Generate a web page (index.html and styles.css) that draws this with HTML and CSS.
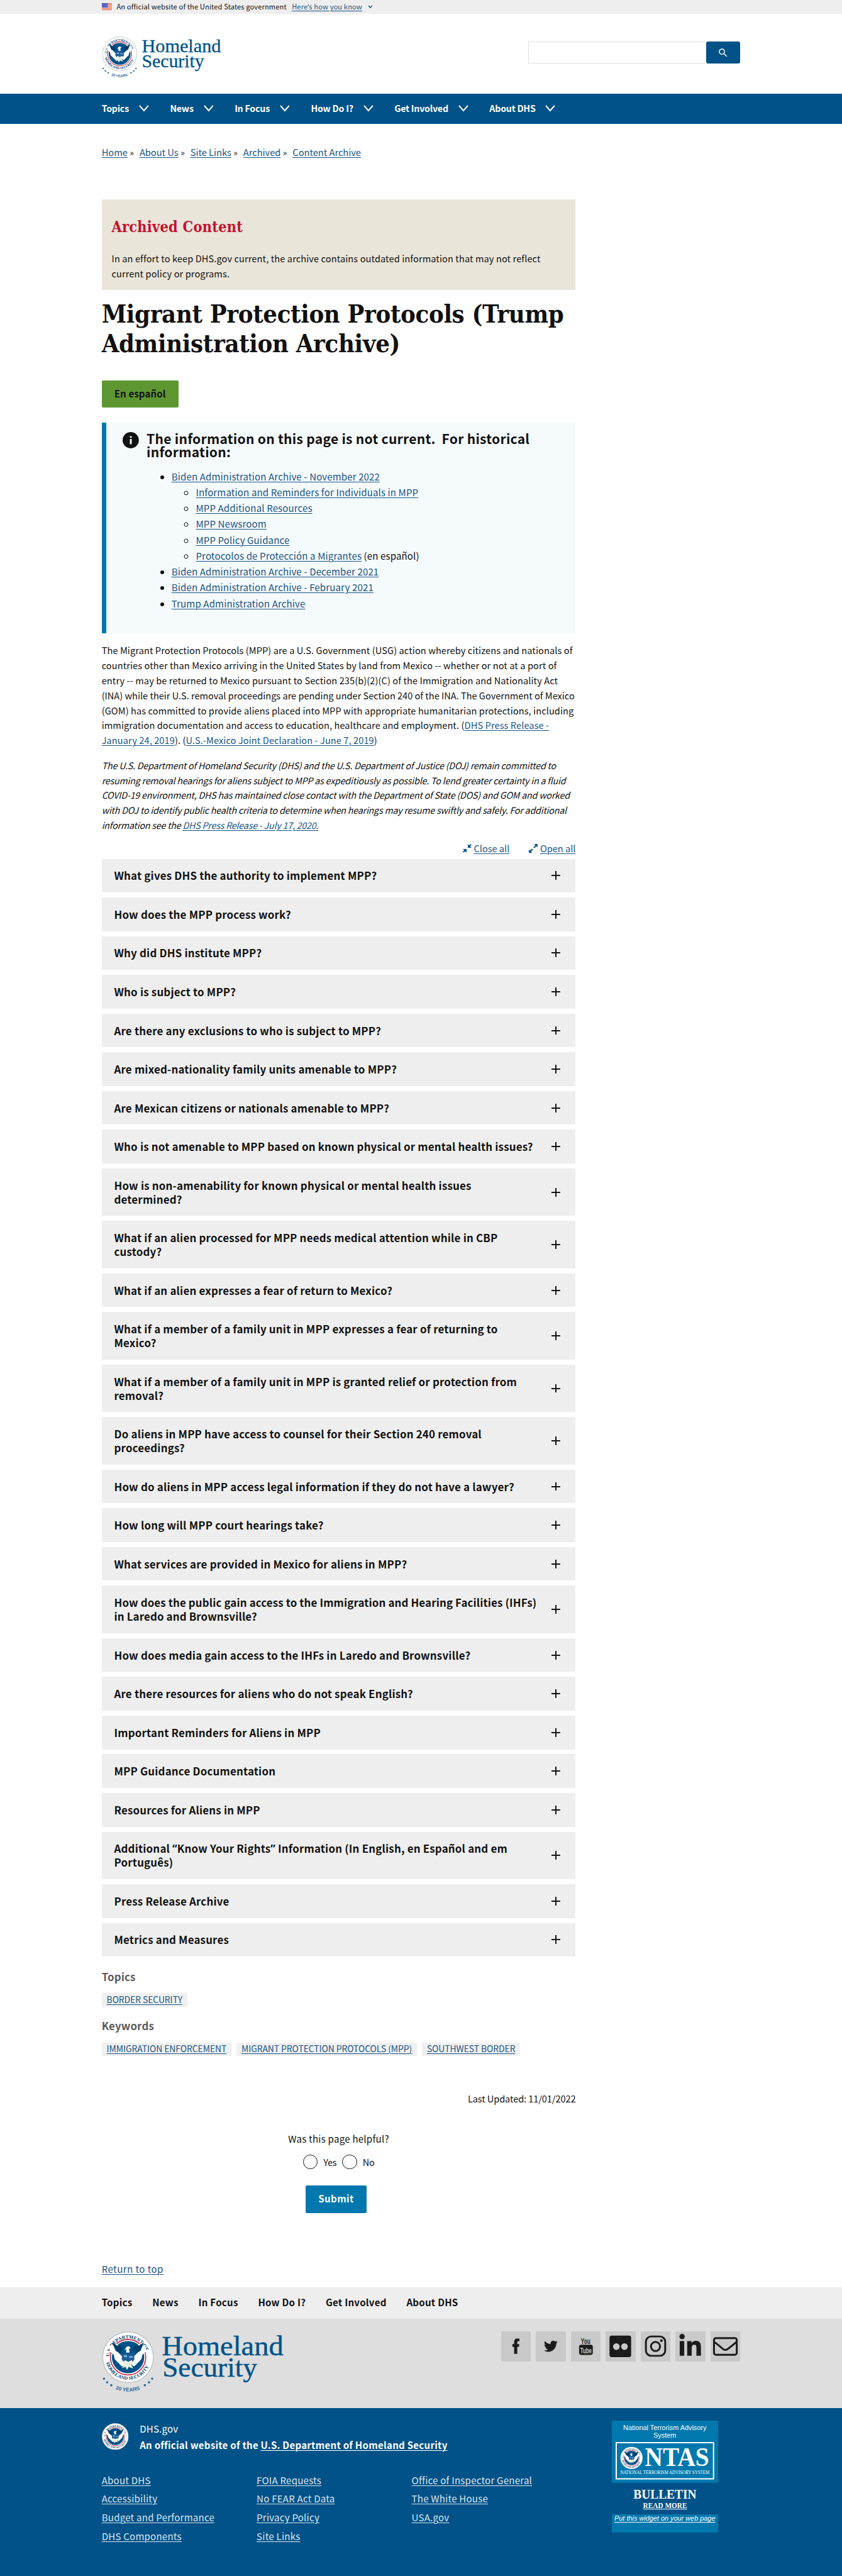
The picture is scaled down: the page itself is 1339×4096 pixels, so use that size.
FILE: index.html
```html
<!DOCTYPE html>
<html lang="en">
<head>
<meta charset="utf-8">
<title>Migrant Protection Protocols (Trump Administration Archive) | Homeland Security</title>
<link rel="stylesheet" href="styles.css">
</head>
<body>
<svg class="defs" aria-hidden="true">
  <symbol id="seal" viewBox="0 0 100 100">
    <circle cx="50" cy="50" r="49.300" fill="#fff" stroke="#b4b9c0" stroke-width="1.400"/>
    <path id="ring-top" d="M13.500 50a36.500 36.500 0 0 1 73 0" fill="none"/>
    <path id="ring-bottom" d="M6 50a44 44 0 0 0 88 0" fill="none"/>
    <g class="seal-text">
      <text><textPath href="#ring-top" startOffset="1">U.S. DEPARTMENT OF</textPath></text>
      <text><textPath href="#ring-bottom" startOffset="11">HOMELAND SECURITY</textPath></text>
    </g>
    <circle cx="50" cy="50" r="34.500" fill="#fff" stroke="#c41230" stroke-width="1.800"/>
    <circle cx="50" cy="50" r="31.500" fill="#005288"/>
    <path d="M17 26l7 3 3-6 4 4-2 12 10 10-3 9-22-20zM83 26l-7 3-3-6-4 4 2 12-10 10 3 9 22-20z" fill="#fff"/>
    <path d="M19 21l9 6 10 1 2 5-5 9-9-4zM81 21l-9 6-10 1-2 5 5 9 9-4z" fill="#00406e"/>
    <path d="M21 40l9 4 10 13 3 8-5 3-14-14zM79 40l-9 4-10 13-3 8 5 3 14-14z" fill="#fff"/>
    <path d="M47 30q6-3 8 2l-3 2 1 7h-7l1-6-4 1z" fill="#fff"/>
    <path d="M38 43h24v11q-4 10-12 13-8-3-12-13z" fill="#1f5f96"/>
    <path d="M42 46h6v4h-6zM52 48h7v3h-7z" fill="#7fb2d8"/>
    <path d="M37 60l8-4 5 3 7-3 6 6-7 2 4 8-9-3-3 6-3-6-7 2 4-7z" fill="#e9f1dc"/>
  </symbol>
  <symbol id="seal-stars" viewBox="0 0 100 116">
    <use href="#seal" x="1" y="0" width="98" height="98"/>
    <g class="stars">
      <circle cx="4" cy="90" r="2.100"/><circle cx="10" cy="97" r="2.200"/><circle cx="18" cy="102.500" r="2.200"/>
      <circle cx="96" cy="90" r="2.100"/><circle cx="90" cy="97" r="2.200"/><circle cx="82" cy="102.500" r="2.200"/>
    </g>
    <path id="years-arc" d="M23 109q27 11 56 0" fill="none"/>
    <text class="years"><textPath href="#years-arc" startOffset="3">20 YEARS</textPath></text>
  </symbol>
  <symbol id="chevron" viewBox="0 0 16 12"><path d="M1 2l7 8 7-8" fill="none" stroke="currentColor" stroke-width="2"/></symbol>
</svg>

<div class="page">
  <div class="banner"><div class="wrap banner-row">
    <svg class="flag" viewBox="0 0 16 11"><path fill="#fff" d="M0 0h16v11H0z"/><path d="M0 .5h16M0 2.500h16M0 4.500h16M0 6.500h16M0 8.500h16M0 10.500h16" stroke="#db3e1f"/><path fill="#1e33b1" d="M0 0h9v7H0z"/><path d="M1 1.500h8M1 3.500h8M1 5.500h8" stroke="#fff" stroke-dasharray="1 1"/></svg>
    <span class="banner-text">An official website of the United States government</span>
    <a class="banner-link">Here<span class="quote">’</span>s how you know</a>
    <svg class="banner-chevron" viewBox="0 0 8 6"><path d="M1 1l3 3.200L7 1" fill="none" stroke="#1a5585" stroke-width="1.500"/></svg>
  </div></div>

  <header class="header"><div class="wrap header-row">
    <svg class="logo" viewBox="0 0 195 66">
      <use href="#seal-stars" x="0" y="0" width="57" height="66"/>
      <g class="logo-text"><text x="64" y="25" textLength="127" lengthAdjust="spacingAndGlyphs">Homeland</text><text x="64" y="49" textLength="100" lengthAdjust="spacingAndGlyphs">Security</text></g>
    </svg>
    <form class="search"><div class="search-input"></div><div class="search-button"><svg viewBox="0 0 24 24"><path fill="#fff" fill-rule="evenodd" d="M15.500 14h-.8l-.3-.3A6.500 6.500 0 1 0 13.700 14.400l.3.300v.8l5 5 1.500-1.500zm-6 0a4.500 4.500 0 1 1 0-9 4.500 4.500 0 0 1 0 9z"/></svg></div></form>
  </div></header>

  <nav class="nav"><div class="wrap nav-row">
    <a><span>Topics</span><svg><use href="#chevron"/></svg></a>
    <a><span>News</span><svg><use href="#chevron"/></svg></a>
    <a><span>In Focus</span><svg><use href="#chevron"/></svg></a>
    <a><span>How Do I?</span><svg><use href="#chevron"/></svg></a>
    <a><span>Get Involved</span><svg><use href="#chevron"/></svg></a>
    <a><span>About DHS</span><svg><use href="#chevron"/></svg></a>
  </div></nav>

  <div class="wrap"><main class="main">
    <div class="crumbs"><span><a>Home</a><i>»</i></span><span><a>About Us</a><i>»</i></span><span><a>Site Links</a><i>»</i></span><span><a>Archived</a><i>»</i></span><span><a>Content Archive</a></span></div>

    <section class="archived">
      <h2>Archived Content</h2>
      <p>In an effort to keep DHS.gov current, the archive contains outdated information that may not reflect<br>current policy or programs.</p>
    </section>

    <h1>Migrant Protection Protocols (Trump<br>Administration Archive)</h1>
    <a class="espanol">En español</a>

    <section class="notice">
      <svg class="notice-icon" viewBox="0 0 26 26"><circle cx="13" cy="13" r="13" fill="#111"/><path d="M11.600 6.500h3v2.700h-3zM11.600 11h3v8.500h-3z" fill="#f5fafd"/></svg>
      <div>
        <h3>The information on this page is not current.&nbsp; For historical<br>information:</h3>
        <ul>
          <li><a>Biden Administration Archive - November 2022</a>
            <ul>
              <li><a>Information and Reminders for Individuals in MPP</a></li>
              <li><a>MPP Additional Resources</a></li>
              <li><a>MPP Newsroom</a></li>
              <li><a>MPP Policy Guidance</a></li>
              <li><a>Protocolos de Protección a Migrantes</a> (en español)</li>
            </ul></li>
          <li><a>Biden Administration Archive - December 2021</a></li>
          <li><a>Biden Administration Archive - February 2021</a></li>
          <li><a>Trump Administration Archive</a></li>
        </ul>
      </div>
    </section>

    <p class="body-text">The Migrant Protection Protocols (MPP) are a U.S. Government (USG) action whereby citizens and nationals of<br>countries other than Mexico arriving in the United States by land from Mexico -- whether or not at a port of<br>entry -- may be returned to Mexico pursuant to Section 235(b)(2)(C) of the Immigration and Nationality Act<br><span class="tight">(INA) while their U.S. removal proceedings are pending under Section 240 of the INA. The Government of Mexico</span><br>(GOM) has committed to provide aliens placed into MPP with appropriate humanitarian protections, including<br>immigration documentation and access to education, healthcare and employment. (<a>DHS Press Release -<br>January 24, 2019</a>). (<a>U.S.-Mexico Joint Declaration - June 7, 2019</a>)</p>
    <p class="body-text note">The U.S. Department of Homeland Security (DHS) and the U.S. Department of Justice (DOJ) remain committed to<br>resuming removal hearings for aliens subject to MPP as expeditiously as possible. To lend greater certainty in a fluid<br>COVID-19 environment, DHS has maintained close contact with the Department of State (DOS) and GOM and worked<br>with DOJ to identify public health criteria to determine when hearings may resume swiftly and safely. For additional<br>information see the <a>DHS Press Release - July 17, 2020.</a></p>

    <div class="toggles">
      <span><svg viewBox="0 0 14 14"><path d="M8 0v6h6l-2.300-2.300L14 1.400 12.600 0l-2.300 2.300zM6 14V8H0l2.300 2.300L0 12.600 1.400 14l2.300-2.300z" fill="#005288"/></svg><a>Close all</a></span>
      <span><svg viewBox="0 0 14 14"><path d="M8.500 0H14v5.500l-2-2-3.200 3.200-1.500-1.500L10.500 2zM5.500 14H0V8.500l2 2 3.200-3.200 1.500 1.500L3.500 12z" fill="#005288"/></svg><a>Open all</a></span>
    </div>

    <div class="accordion">
      <div class="item"><span>What gives DHS the authority to implement MPP?</span><i class="plus"></i></div>
      <div class="item"><span>How does the MPP process work?</span><i class="plus"></i></div>
      <div class="item"><span>Why did DHS institute MPP?</span><i class="plus"></i></div>
      <div class="item"><span>Who is subject to MPP?</span><i class="plus"></i></div>
      <div class="item"><span>Are there any exclusions to who is subject to MPP?</span><i class="plus"></i></div>
      <div class="item"><span>Are mixed-nationality family units amenable to MPP?</span><i class="plus"></i></div>
      <div class="item"><span>Are Mexican citizens or nationals amenable to MPP?</span><i class="plus"></i></div>
      <div class="item"><span>Who is not amenable to MPP based on known physical or mental health issues?</span><i class="plus"></i></div>
      <div class="item"><span>How is non-amenability for known physical or mental health issues<br>determined?</span><i class="plus"></i></div>
      <div class="item"><span>What if an alien processed for MPP needs medical attention while in CBP<br>custody?</span><i class="plus"></i></div>
      <div class="item"><span>What if an alien expresses a fear of return to Mexico?</span><i class="plus"></i></div>
      <div class="item"><span>What if a member of a family unit in MPP expresses a fear of returning to<br>Mexico?</span><i class="plus"></i></div>
      <div class="item"><span>What if a member of a family unit in MPP is granted relief or protection from<br>removal?</span><i class="plus"></i></div>
      <div class="item"><span>Do aliens in MPP have access to counsel for their Section 240 removal<br>proceedings?</span><i class="plus"></i></div>
      <div class="item"><span>How do aliens in MPP access legal information if they do not have a lawyer?</span><i class="plus"></i></div>
      <div class="item"><span>How long will MPP court hearings take?</span><i class="plus"></i></div>
      <div class="item"><span>What services are provided in Mexico for aliens in MPP?</span><i class="plus"></i></div>
      <div class="item"><span class="snug">How does the public gain access to the Immigration and Hearing Facilities (IHFs)<br>in Laredo and Brownsville?</span><i class="plus"></i></div>
      <div class="item"><span>How does media gain access to the IHFs in Laredo and Brownsville?</span><i class="plus"></i></div>
      <div class="item"><span>Are there resources for aliens who do not speak English?</span><i class="plus"></i></div>
      <div class="item"><span>Important Reminders for Aliens in MPP</span><i class="plus"></i></div>
      <div class="item"><span>MPP Guidance Documentation</span><i class="plus"></i></div>
      <div class="item"><span>Resources for Aliens in MPP</span><i class="plus"></i></div>
      <div class="item"><span>Additional <span class="quote">“</span>Know Your Rights<span class="quote">”</span> Information (In English, en Español and em<br>Português)</span><i class="plus"></i></div>
      <div class="item"><span>Press Release Archive</span><i class="plus"></i></div>
      <div class="item"><span>Metrics and Measures</span><i class="plus"></i></div>
    </div>

    <h4 class="tag-title">Topics</h4>
    <div class="tags"><a>BORDER SECURITY</a></div>
    <h4 class="tag-title keywords">Keywords</h4>
    <div class="tags clipped"><a>IMMIGRATION ENFORCEMENT</a><a>MIGRANT PROTECTION PROTOCOLS (MPP)</a><a>SOUTHWEST BORDER</a></div>

    <p class="updated">Last Updated: 11/01/2022</p>

    <div class="survey">
      <p>Was this page helpful?</p>
      <div class="radios"><i class="radio"></i><span>Yes</span><i class="radio"></i><span>No</span></div>
      <div class="submit">Submit</div>
    </div>
    <a class="return">Return to top</a>
  </main></div>

  <footer>
    <div class="foot-nav"><div class="wrap foot-nav-row"><span>Topics</span><span>News</span><span>In Focus</span><span>How Do I?</span><span>Get Involved</span><span>About DHS</span></div></div>
    <div class="foot-brand"><div class="wrap foot-brand-row">
      <svg class="foot-logo" viewBox="0 0 292 98">
        <use href="#seal-stars" x="0" y="0" width="84" height="98"/>
        <g class="foot-logo-text"><text x="96" y="38" textLength="195" lengthAdjust="spacingAndGlyphs">Homeland</text><text x="97" y="73" textLength="152" lengthAdjust="spacingAndGlyphs">Security</text></g>
      </svg>
      <div class="social">
        <svg viewBox="0 0 48 48"><path d="M20.800 36V25H18v-4.600h2.800v-3.200c0-3.800 1.900-5.500 5-5.500h3.500v4.200h-2c-1.200 0-1.500.6-1.500 1.700v2.800H29l-.5 4.600h-2.700v11z"/></svg>
        <svg viewBox="0 0 48 48"><path transform="translate(13 12.800) scale(.92)" d="M23.953 4.570a10 10 0 01-2.825.775 4.958 4.958 0 002.163-2.723c-.951.555-2.005.959-3.127 1.184a4.920 4.920 0 00-8.384 4.482C7.690 8.095 4.067 6.130 1.640 3.162a4.822 4.822 0 00-.666 2.475c0 1.710.870 3.213 2.188 4.096a4.904 4.904 0 01-2.228-.616v.060a4.923 4.923 0 003.946 4.827 4.996 4.996 0 01-2.212.085 4.936 4.936 0 004.604 3.417 9.867 9.867 0 01-6.102 2.105c-.390 0-.779-.023-1.170-.067a13.995 13.995 0 007.557 2.209c9.053 0 13.998-7.496 13.998-13.985 0-.210 0-.420-.015-.630A9.935 9.935 0 0024 4.590z"/></svg>
        <svg viewBox="0 0 48 48"><rect x="13" y="21.500" width="22" height="16.200" rx="3.500"/><text class="yt" x="16" y="20" textLength="15" lengthAdjust="spacingAndGlyphs">You</text><text class="yt yt-light" x="15" y="35" textLength="18" lengthAdjust="spacingAndGlyphs">Tube</text></svg>
        <svg viewBox="0 0 48 48"><rect x="6.300" y="6.700" width="34.700" height="34.700" rx="3.500"/><circle cx="17.300" cy="24.500" r="5.300" fill="#c9c9c9"/><circle cx="30.300" cy="24.500" r="5.300" fill="#c9c9c9"/></svg>
        <svg viewBox="0 0 48 48"><rect x="8.200" y="8.200" width="31" height="31" rx="8.500" class="line"/><circle cx="23.600" cy="24.300" r="7.300" class="line"/><circle cx="33" cy="14.800" r="2.200"/></svg>
        <svg viewBox="0 0 48 48"><circle cx="10.800" cy="8.400" r="4.300"/><path d="M7 15.700h7.200V39H7zM19 15.700h7v3.200c1.200-2.200 3.800-3.700 7-3.700 6 0 8 4 8 9.800v14h-7.200V26.500c0-3-.8-5-3.400-5-3 0-4.200 2.200-4.200 5V39H19z"/></svg>
        <svg viewBox="0 0 48 48"><rect x="5.500" y="10.800" width="36.500" height="26.700" rx="3" class="line"/><path d="M5.500 16.500C11 21 16 25 19.500 28q4.200 3.500 8.500 0C32 25 37 21 42 16.500" class="line"/></svg>
      </div>
    </div></div>
    <div class="foot-main"><div class="wrap foot-main-row">
      <div class="foot-left">
        <div class="ident"><svg><use href="#seal"/></svg><div><p>DHS.gov</p><p class="strong">An official website of the <a>U.S. Department of Homeland Security</a></p></div></div>
        <div class="links">
          <div><a>About DHS</a><a>Accessibility</a><a>Budget and Performance</a><a>DHS Components</a></div>
          <div><a>FOIA Requests</a><a>No FEAR Act Data</a><a>Privacy Policy</a><a>Site Links</a></div>
          <div><a>Office of Inspector General</a><a>The White House</a><a>USA.gov</a></div>
        </div>
      </div>
      <div class="ntas">
        <p>National Terrorism Advisory<br>System</p>
        <svg class="ntas-badge" viewBox="0 0 158 60"><rect x="1" y="1" width="156" height="58" fill="none" stroke="#fff" stroke-width="2"/><use href="#seal" x="7.500" y="7.500" width="36" height="36"/><g class="ntas-text"><text class="big" x="47" y="38.300" textLength="103" lengthAdjust="spacingAndGlyphs">NTAS</text><text class="tiny" x="7.500" y="51.500" textLength="143" lengthAdjust="spacingAndGlyphs">NATIONAL TERRORISM ADVISORY SYSTEM</text></g></svg>
        <svg class="bulletin" viewBox="0 0 170 50"><g class="ntas-text"><text class="bull" x="34.600" y="25" textLength="101" lengthAdjust="spacingAndGlyphs">BULLETIN</text><text class="more" x="50" y="40" textLength="70.500" lengthAdjust="spacingAndGlyphs">READ MORE</text></g><path d="M50 42h70.500" stroke="#fff"/></svg>
        <a class="put">Put this widget on your web page</a>
      </div>
    </div></div>
  </footer>
</div>
</body>
</html>
```
FILE: styles.css
```css
html { background: #fff; }
body { margin: 0; zoom: .9918; }
* { box-sizing: border-box; }
h1, h2, h3, h4, p, ul { margin: 0; padding: 0; }
i { font-style: normal; }
.page {
  height: 4130px;
  font-family: "Noto Sans CJK SC", sans-serif;
  font-size: 14.7px;
  line-height: 24px;
  color: #111;
  white-space: nowrap;
  overflow: hidden;
}
.wrap { margin: 0 163px; width: 1024px; }
a { color: #1a5585; text-decoration: underline; text-decoration-thickness: 1px; text-underline-offset: 2px; }
svg { display: block; }
.defs { display: none; }
.quote { font-family: "Noto Sans", sans-serif; line-height: 1; }

.seal-text { font: 700 9.500px "Liberation Serif", serif; fill: #00406e; }
.stars { fill: #2a6c9c; }
.years { font: 700 10px "Liberation Sans", sans-serif; fill: #2a6c9c; }

.banner { height: 22px; background: #eee; }
.banner-row { display: flex; align-items: center; height: 22px; font-size: 11.200px; line-height: 22px; letter-spacing: .14px; }
.flag { width: 16px; height: 11px; margin-right: 8px; }
.banner-text { width: 281px; }
.banner-link { width: 122px; }
.banner-chevron { width: 8px; height: 6px; }

.header { height: 128px; }
.header-row { display: flex; justify-content: space-between; align-items: flex-start; padding-top: 36px; }
.logo { width: 195px; height: 66px; }
.logo-text { font: 30px "Liberation Serif", serif; fill: #005288; stroke: #005288; stroke-width: .3; }
.search { display: flex; margin-top: 9px; }
.search-input { width: 285px; height: 35px; border: 1px solid #dfe1e2; border-right: 0; background: #fff; }
.search-button { display: flex; align-items: center; justify-content: center; width: 55px; height: 35px; border-radius: 3px; background: #005288; }
.search-button svg { width: 18px; height: 18px; }

.nav { height: 49px; background: #005288; }
.nav-row { display: flex; gap: 34px; font-size: 14.350px; letter-spacing: -.22px; }
.nav a { display: flex; align-items: center; gap: 16px; height: 46px; color: #fff; font-weight: 700; text-decoration: none; }
.nav svg { width: 16px; height: 12px; }

.main { width: 760px; }
.crumbs { display: flex; gap: 9px; margin-top: 33px; height: 24px; font-size: 14.850px; letter-spacing: -.05px; }
.crumbs i { margin-left: 3.500px; font-size: 14px; }

.archived { height: 145px; margin-top: 64px; padding: 28.700px 16px 0; background: #e9e5d9; }
.archived h2 { font: 700 23.500px/30px "DejaVu Serif Condensed", "DejaVu Serif", serif; letter-spacing: .26px; color: #c41230; }
.archived p { margin-top: 23.600px; letter-spacing: .11px; }
h1 { margin-top: 15px; font: 700 40px/47.300px "DejaVu Serif Condensed", "DejaVu Serif", serif; letter-spacing: -.34px; color: #111; }
.espanol { display: block; width: 123px; height: 43px; margin-top: 35.400px; border-radius: 2px; background: #5e9732; color: #111; font-size: 15.200px; font-weight: 700; line-height: 43px; letter-spacing: .11px; text-align: center; text-decoration: none; }

.notice { display: flex; gap: 12px; height: 337px; margin-top: 25px; padding: 15px 0 0 27px; border-left: 8px solid #0078ae; background: #f5fafd; }
.notice-icon { width: 26px; height: 26px; }
.notice h3 { font-size: 21.200px; line-height: 21px; letter-spacing: .280px; }
.notice ul { margin-top: 16px; padding-left: 40px; font-size: 15.200px; line-height: 25.460px; letter-spacing: .120px; }
.notice ul ul { margin-top: 0; padding-left: 39px; }

.body-text { margin-top: 16px; letter-spacing: .1px; }
.tight { letter-spacing: 0; }
.note { font-size: 14.400px; font-style: italic; letter-spacing: -.210px; }
.toggles { display: flex; justify-content: flex-end; gap: 31px; margin-top: 13px; height: 29px; }
.toggles span { display: flex; align-items: center; gap: 4px; height: 24px; }
.toggles svg { width: 14px; height: 14px; }

.accordion { display: flex; flex-direction: column; gap: 8px; }
.item { display: flex; justify-content: space-between; align-items: center; padding: 16px 25px 16px 20px; background: #eee; font-size: 17px; font-weight: 700; line-height: 22.080px; letter-spacing: .210px; }
.snug { letter-spacing: .150px; }
.plus { width: 14px; height: 14px; background: linear-gradient(#111, #111) center / 14px 2px no-repeat, linear-gradient(#111, #111) center / 2px 14px no-repeat; }

.tag-title { margin-top: 20.900px; font-size: 17px; line-height: 22px; letter-spacing: .16px; color: #5b5b5b; }
.keywords { margin-top: 19.500px; }
.tags { display: flex; gap: 8px; margin-top: 15px; height: 22.400px; font-size: 14px; line-height: 21px; letter-spacing: -.06px; }
.tags a { padding: 0 8px; background: #f0f0f0; }
.clipped { margin-top: 16.400px; height: 20.600px; line-height: 20px; }
.updated { margin-top: 57px; text-align: right; letter-spacing: -.09px; }
.survey { display: flex; flex-direction: column; align-items: center; margin-top: 40.900px; font-size: 15.200px; letter-spacing: .24px; }
.radios { display: flex; align-items: center; margin-top: 12.500px; font-size: 14.600px; letter-spacing: -.3px; }
.radio { width: 24px; height: 24px; border: 2px solid #111; border-radius: 50%; }
.radios span { margin: 0 9px; }
.radios span:last-child { margin-right: 0; }
.submit { width: 98px; height: 44px; margin: 26px 8px 0 0; border-radius: 2px; background: #0078ae; color: #fff; font-weight: 700; line-height: 43px; letter-spacing: .4px; text-align: center; }
.return { display: block; width: max-content; margin-top: 78.200px; margin-bottom: 16.500px; font-size: 15.200px; letter-spacing: .430px; }

.foot-nav { height: 51px; background: #eee; }
.foot-nav-row { display: flex; gap: 32px; font-size: 15.200px; font-weight: 700; line-height: 48.800px; letter-spacing: .270px; }
.foot-brand { height: 143px; background: #dedede; }
.foot-brand-row { display: flex; justify-content: space-between; align-items: flex-start; padding-top: 20px; }
.foot-logo { width: 292px; height: 98px; }
.foot-logo-text { font: 45.500px "Liberation Serif", serif; fill: #005288; stroke: #005288; stroke-width: .4; }
.social { display: flex; gap: 8px; }
.social svg { width: 48px; height: 48px; background: #c9c9c9; fill: #1b1b1b; }
.social .line { fill: none; stroke: #1b1b1b; stroke-width: 3; }
.yt { font: 700 12.500px "Liberation Sans", sans-serif; }
.social .yt-light { fill: #c9c9c9; }
.foot-main { height: 275px; background: #005288; color: #fff; }
.foot-main-row { display: flex; justify-content: space-between; padding-top: 20px; }
.foot-left { font-size: 15.200px; letter-spacing: .220px; }
.ident { display: flex; gap: 18px; }
.ident svg { width: 43px; height: 43px; margin-top: 4px; }
.ident p { line-height: 26px; }
.ident .strong { font-weight: 700; letter-spacing: .260px; }
.ident a { color: #fff; }
.links { display: flex; margin-top: 28.500px; }
.links div { display: flex; flex-direction: column; width: 248.500px; line-height: 30px; }
.links a { align-self: flex-start; color: #dce4ef; }
.ntas { width: 170px; height: 180px; margin-right: 36px; background: #0078ae; font: 11px/12px "Liberation Sans", Arial, sans-serif; text-align: center; }
.ntas p { padding-top: 6px; height: 35px; }
.ntas-badge { width: 158px; height: 60px; margin: 0 6px; }
.ntas-text { font-family: "Liberation Serif", serif; font-weight: 700; fill: #fff; }
.big { font-size: 42px; }
.tiny { font-size: 8px; font-weight: 400; }
.bull { font-size: 21.500px; }
.more { font-size: 13px; }
.bulletin { width: 170px; height: 50px; margin-top: 5px; background: #005288; }
.put { display: block; padding-top: 2px; color: #fff; font-style: italic; }
```
